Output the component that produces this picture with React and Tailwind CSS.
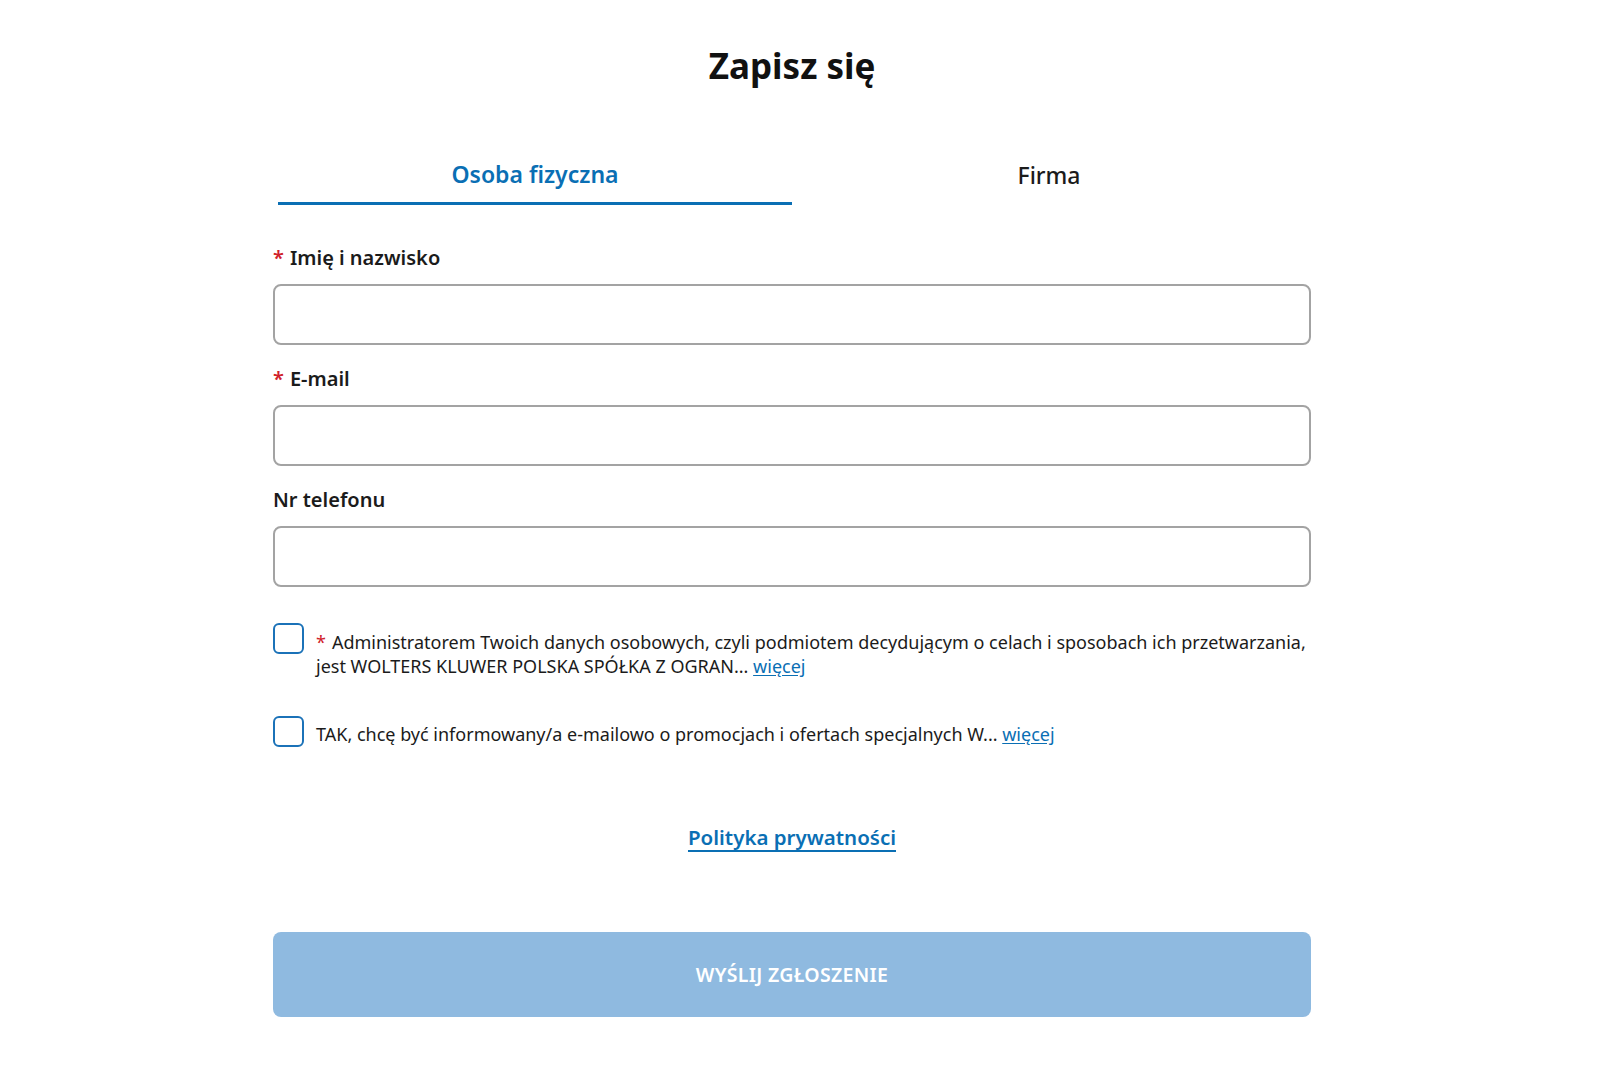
import React from "react";

const font = { fontFamily: '"Noto Sans", "Open Sans", sans-serif' };

function Field({ label, required }) {
  return (
    <div className="mb-[20px]">
      <div className="h-[28px] flex items-center text-[20px] font-semibold text-[#1b1b1b] mb-[12px]">
        {required && <span className="text-[#d0212a] mr-[6px]">*</span>}
        {label}
      </div>
      <input className="block w-full h-[61px] rounded-[8px] border-2 border-[#a3a3a3] bg-white outline-none px-4" />
    </div>
  );
}

export default function App() {
  return (
    <div className="bg-white pr-[16px]" style={font}>
      <div className="w-[1038px] mx-auto pt-[44px] pb-[30px]">
        <h1 className="text-center text-[35px] leading-[44px] font-bold text-[#111]">Zapisz się</h1>

        <div className="mt-[70px] grid grid-cols-2 px-[5px]">
          <button className="pb-[12px] border-b-[3px] border-[#0a6fb4] text-[23px] leading-[32px] font-semibold text-[#0a6fb4]">
            Osoba fizyczna
          </button>
          <button className="pb-[12px] border-b-[3px] border-transparent text-[23px] leading-[32px] font-medium text-[#1b1b1b] translate-y-[1px]">
            Firma
          </button>
        </div>

        <div className="mt-[39px]">
          <Field label="Imię i nazwisko" required />
          <Field label="E-mail" required />
          <Field label="Nr telefonu" />
        </div>

        <div className="mt-[36px] flex items-start">
          <span className="shrink-0 w-[31px] h-[31px] rounded-[6px] border-2 border-[#1b72b8] bg-white" />
          <p className="ml-[12px] mt-[7px] text-[18px] leading-[24px] text-[#1b1b1b]">
            <span className="text-[#d0212a] mr-[6px]">*</span>
            Administratorem Twoich danych osobowych, czyli podmiotem decydującym o celach i sposobach ich przetwarzania, jest WOLTERS KLUWER POLSKA SPÓŁKA Z OGRAN...{" "}
            <a className="text-[#0a6fb4] underline underline-offset-[2px]">więcej</a>
          </p>
        </div>

        <div className="mt-[38px] flex items-start">
          <span className="shrink-0 w-[31px] h-[31px] rounded-[6px] border-2 border-[#1b72b8] bg-white" />
          <p className="ml-[12px] mt-[6px] text-[18px] leading-[24px] text-[#1b1b1b]">
            TAK, chcę być informowany/a e-mailowo o promocjach i ofertach specjalnych W...{" "}
            <a className="text-[#0a6fb4] underline underline-offset-[2px]">więcej</a>
          </p>
        </div>

        <div className="mt-[76px] text-center">
          <a className="text-[20.5px] leading-[28px] font-semibold text-[#0a6fb4] underline decoration-2 underline-offset-[5px]">
            Polityka prywatności
          </a>
        </div>

        <button className="mt-[81px] w-full h-[85px] rounded-[8px] bg-[#8fbae0] text-white text-[19.5px] font-semibold tracking-[0.3px]">
          WYŚLIJ ZGŁOSZENIE
        </button>
      </div>
    </div>
  );
}
